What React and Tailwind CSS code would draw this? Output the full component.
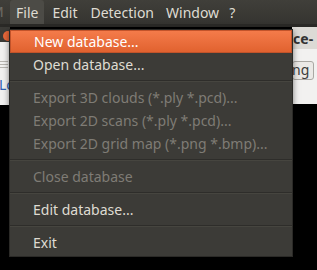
import React from "react";

const menuItems = [
  { label: "New database...", active: true },
  { label: "Open database..." },
  { sep: true },
  { label: "Export 3D clouds (*.ply *.pcd)...", disabled: true },
  { label: "Export 2D scans (*.ply *.pcd)...", disabled: true },
  { label: "Export 2D grid map (*.png *.bmp)...", disabled: true },
  { sep: true },
  { label: "Close database", disabled: true },
  { sep: true },
  { label: "Edit database..." },
  { sep: true },
  { label: "Exit" },
];

export default function App() {
  return (
    <div className="relative w-[317px] h-[270px] overflow-hidden bg-black font-['Noto_Sans',sans-serif] text-[14px]">
      {/* Menu bar */}
      <div className="flex h-[24px] items-stretch bg-gradient-to-b from-[#403f3a] to-[#353430] text-[#dfdbd2]">
        <div className="w-[10px] overflow-hidden pl-0 pt-[3px] text-[#6e6c66] leading-[18px]">
          <span className="-ml-[9px]">M</span>
        </div>
        <div className="flex items-center rounded-t-[3px] bg-[#4c4b46] px-[6px]">File</div>
        <div className="flex items-center px-[7px] ml-[1px]">Edit</div>
        <div className="flex items-center px-[6px]">Detection</div>
        <div className="flex items-center px-[6px]">Window</div>
        <div className="flex items-center px-[4px]">?</div>
      </div>
      <div className="h-[3px] bg-[#2a2926]" />

      {/* Window content peeking around the menu */}
      <div className="flex">
        <div className="w-[10px]">
          <div className="h-[15px] bg-[#3c3b37] relative overflow-hidden">
            <div className="absolute left-[3px] top-[4px] h-[10px] w-[10px] rounded-full bg-[#e9683a]" />
          </div>
          <div className="h-[63px] bg-[#f2f1f0] border-r border-[#c9c6c0] relative">
            <div className="absolute left-0 top-[19px] h-[1px] w-[8px] bg-[#b8b5b0]" />
            <div className="absolute left-0 top-[22px] h-[1px] w-[8px] bg-[#b8b5b0]" />
            <div className="absolute left-0 top-[25px] h-[1px] w-[8px] bg-[#b8b5b0]" />
            <div className="absolute -left-[1px] top-[34px] leading-[18px] text-[#2f5fb3]">Lo</div>
          </div>
        </div>
        <div className="flex-1" />
        <div className="w-[25px]">
          <div className="h-[22px] bg-[#dcdad5] overflow-hidden pt-[1px]">
            <span className="-ml-[8px] font-bold text-[#333] leading-[18px] whitespace-nowrap">
              nce-
            </span>
          </div>
          <div className="h-[55px] bg-[#f2f1f0] pt-[12px]">
            <div className="h-[19px] w-[22px] rounded-[3px] border border-[#aaa8a3] bg-[#ebe9e6] overflow-hidden pl-0 leading-[16px] text-[#3c3c3c] text-[14px]">
              <span className="-ml-[1px]">ng</span>
            </div>
          </div>
        </div>
      </div>

      {/* Dropdown menu */}
      <div className="absolute left-[9px] top-[29px] w-[284px] border border-[#2b2a27] bg-[#3c3b37] pb-[2px] shadow-[0_2px_6px_rgba(0,0,0,0.5)]">
        {menuItems.map((it, i) =>
          it.sep ? (
            <div key={i} className="h-[10px] pt-[4px]">
              <div className="h-[1px] bg-[#2e2d2a]" />
              <div className="h-[1px] bg-[#46453f]" />
            </div>
          ) : (
            <div
              key={i}
              className={
                "flex h-[23px] items-center pl-[23px] whitespace-nowrap " +
                (it.active
                  ? "bg-gradient-to-b from-[#f47b4a] to-[#e1622f] text-white border border-[#c2532a]"
                  : it.disabled
                  ? "text-[#7f7c75]"
                  : "text-[#dfdbd2]")
              }
            >
              {it.label}
            </div>
          )
        )}
      </div>
    </div>
  );
}
